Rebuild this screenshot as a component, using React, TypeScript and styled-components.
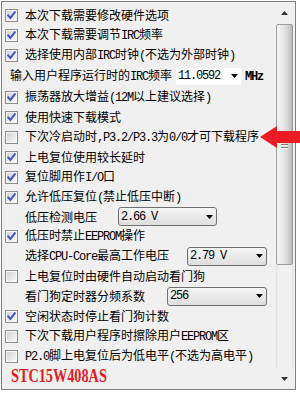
import React from 'react';
import styled, { createGlobalStyle } from 'styled-components';

const Global = createGlobalStyle`
  html, body { margin: 0; padding: 0; background: #ffffff; }
  body { font-family: "Noto Sans CJK SC", sans-serif; }
`;

const Page = styled.div`
  position: relative;
  width: 300px;
  height: 394px;
  overflow: hidden;
`;

const Frame = styled.div`
  box-sizing: border-box;
  margin: 1px 0 0 1px;
  width: 295px;
  height: 389px;
  border: 1px solid #7f7f7f;
  background: #f0f0f0;
  display: flex;
  padding-right: 2px;
`;

const List = styled.div`
  flex: 1;
  display: flex;
  flex-direction: column;
  padding: 3px 0 0 3px;
  font-family: "Noto Sans CJK SC", sans-serif;
  font-size: 12px;
  color: #000;
`;

const Row = styled.div<{ $h?: number; $indent?: number }>`
  display: flex;
  align-items: center;
  height: ${(p) => p.$h ?? 20}px;
  line-height: 20px;
  padding-left: ${(p) => p.$indent ?? 0}px;
  white-space: nowrap;
`;

const Label = styled.span<{ $w?: number; $gap?: number }>`
  flex-shrink: 0;
  margin-left: ${(p) => p.$gap ?? 0}px;
  width: ${(p) => (p.$w ? `${p.$w}px` : 'auto')};
`;

const Lat = styled.span<{ $bold?: boolean }>`
  font-family: "Liberation Mono", monospace;
  font-size: 12px;
  letter-spacing: -1.2px;
  font-weight: ${(p) => (p.$bold ? 700 : 400)};
`;

const Box = styled.span<{ $on: boolean }>`
  box-sizing: border-box;
  width: 13px;
  height: 13px;
  flex-shrink: 0;
  border: 1px solid #8e8f8f;
  box-shadow: inset 0 0 0 1px #f6f6f6;
  background: linear-gradient(135deg, #d2d2d2 0%, #e6e6e6 55%, #fbfbfb 100%);
  display: inline-flex;
  align-items: center;
  justify-content: center;
`;

const Combo = styled.div<{ $w: number; $edit?: boolean }>`
  box-sizing: border-box;
  flex-shrink: 0;
  width: ${(p) => p.$w}px;
  height: 19px;
  display: flex;
  align-items: center;
  padding-left: 2px;
  border-radius: ${(p) => (p.$edit ? 0 : 3)}px;
  border: 1px solid ${(p) => (p.$edit ? '#f2f2f2' : '#707070')};
  background: ${(p) => (p.$edit ? '#ffffff' : 'linear-gradient(#f7f7f7, #e9e9e9 50%, #dedede)')};
`;

const ComboArrow = styled.svg`
  margin-left: auto;
  margin-right: 3px;
  flex-shrink: 0;
`;

const Unit = styled.span`
  margin-left: 3px;
`;

const Scroll = styled.div`
  width: 17px;
  display: flex;
  flex-direction: column;
  flex-shrink: 0;
`;

const ScrollBtn = styled.div<{ $h: number }>`
  height: ${(p) => p.$h}px;
  display: flex;
  align-items: center;
  justify-content: center;
  flex-shrink: 0;
`;

const Thumb = styled.div`
  box-sizing: border-box;
  height: 241px;
  flex-shrink: 0;
  border: 1px solid #9c9c9c;
  border-radius: 2px;
  background: linear-gradient(to right, #f3f3f3 0%, #e8e8e8 40%, #d6d6d6 70%, #c2c2c2 90%, #b4b4b4 100%);
  display: flex;
  flex-direction: column;
  align-items: center;
  justify-content: center;
  gap: 1px;
`;

const Grip = styled.span`
  width: 7px;
  height: 1px;
  background: #7d7d7d;
  box-shadow: 0 1px 0 #fafafa;
  margin-bottom: 1px;
`;

const TrackRest = styled.div`
  flex: 1;
  border-left: 1px solid #e2e2e2;
  border-right: 1px solid #e2e2e2;
`;

const ModelRow = styled.div`
  height: 20px;
  display: flex;
  align-items: center;
  padding-left: 6px;
`;

const ModelText = styled.span`
  display: inline-block;
  font-family: "Liberation Serif", serif;
  font-weight: 700;
  font-size: 19px;
  line-height: 20px;
  color: #e31b23;
  transform: scaleX(0.75);
  transform-origin: left center;
`;

const RedArrow = styled.svg`
  position: absolute;
  left: 260px;
  top: 126px;
`;

function Txt({ s }: { s: string }) {
  const parts = s.split(/([\x20-\x7E]+)/).filter(Boolean);
  return (
    <>
      {parts.map((p, i) =>
        /^[\x20-\x7E]+$/.test(p) ? <Lat key={i}>{p}</Lat> : <React.Fragment key={i}>{p}</React.Fragment>
      )}
    </>
  );
}

function Check({ on }: { on: boolean }) {
  return (
    <Box $on={on}>
      {on && (
        <svg width="9" height="9" viewBox="0 0 9 9">
          <path d="M1.2 4.4 L3.4 6.9 L7.8 1.2" fill="none" stroke="#3d55c2" strokeWidth="1.9" strokeLinecap="square" />
        </svg>
      )}
    </Box>
  );
}

function Tri({ up, color = '#111' }: { up?: boolean; color?: string }) {
  return (
    <svg width="7" height="4" viewBox="0 0 7 4">
      <polygon points={up ? '0,4 7,4 3.5,0' : '0,0 7,0 3.5,4'} fill={color} />
    </svg>
  );
}

type Item =
  | { kind: 'check'; text: string; on: boolean }
  | {
      kind: 'combo';
      text: string;
      indent: number;
      labelW: number;
      value: string;
      comboW: number;
      edit?: boolean;
      unit?: string;
      h?: number;
    };

const items: Item[] = [
  { kind: 'check', text: '本次下载需要修改硬件选项', on: true },
  { kind: 'check', text: '本次下载需要调节IRC频率', on: true },
  { kind: 'check', text: '选择使用内部IRC时钟(不选为外部时钟)', on: true },
  { kind: 'combo', text: '输入用户程序运行时的IRC频率', indent: 5, labelW: 165, value: '11.0592', comboW: 67, edit: true, unit: 'MHz', h: 22 },
  { kind: 'check', text: '振荡器放大增益(12M以上建议选择)', on: true },
  { kind: 'check', text: '使用快速下载模式', on: true },
  { kind: 'check', text: '下次冷启动时,P3.2/P3.3为0/0才可下载程序', on: false },
  { kind: 'check', text: '上电复位使用较长延时', on: true },
  { kind: 'check', text: '复位脚用作I/O口', on: true },
  { kind: 'check', text: '允许低压复位(禁止低压中断)', on: true },
  { kind: 'combo', text: '低压检测电压', indent: 20, labelW: 93, value: '2.66 V', comboW: 99, h: 19 },
  { kind: 'check', text: '低压时禁止EEPROM操作', on: true },
  { kind: 'combo', text: '选择CPU-Core最高工作电压', indent: 20, labelW: 162, value: '2.79 V', comboW: 80 },
  { kind: 'check', text: '上电复位时由硬件自动启动看门狗', on: false },
  { kind: 'combo', text: '看门狗定时器分频系数', indent: 20, labelW: 142, value: '256', comboW: 100 },
  { kind: 'check', text: '空闲状态时停止看门狗计数', on: true },
  { kind: 'check', text: '下次下载用户程序时擦除用户EEPROM区', on: false },
  { kind: 'check', text: 'P2.0脚上电复位后为低电平(不选为高电平)', on: false },
];

export default function App() {
  return (
    <>
      <Global />
      <Page>
        <Frame>
          <List>
            {items.map((it, i) =>
              it.kind === 'check' ? (
                <Row key={i}>
                  <Check on={it.on} />
                  <Label $gap={7}>
                    <Txt s={it.text} />
                  </Label>
                </Row>
              ) : (
                <Row key={i} $h={it.h} $indent={it.indent}>
                  <Label $w={it.labelW}>
                    <Txt s={it.text} />
                  </Label>
                  <Combo $w={it.comboW} $edit={it.edit}>
                    <Lat>{it.value}</Lat>
                    <ComboArrow width="7" height="4" viewBox="0 0 7 4">
                      <polygon points="0,0 7,0 3.5,4" fill="#000" />
                    </ComboArrow>
                  </Combo>
                  {it.unit && (
                    <Unit>
                      <Lat $bold>{it.unit}</Lat>
                    </Unit>
                  )}
                </Row>
              )
            )}
            <ModelRow>
              <ModelText>STC15W408AS</ModelText>
            </ModelRow>
          </List>
          <Scroll>
            <ScrollBtn $h={22}>
              <Tri up color="#333" />
            </ScrollBtn>
            <Thumb>
              <Grip />
              <Grip />
              <Grip />
            </Thumb>
            <TrackRest />
            <ScrollBtn $h={20}>
              <Tri color="#333" />
            </ScrollBtn>
          </Scroll>
        </Frame>
        <RedArrow width="40" height="23" viewBox="0 0 40 23">
          <polygon points="0,11 17,0 17,5 40,5 40,17 17,17 17,22" fill="#ed1c24" />
        </RedArrow>
      </Page>
    </>
  );
}
